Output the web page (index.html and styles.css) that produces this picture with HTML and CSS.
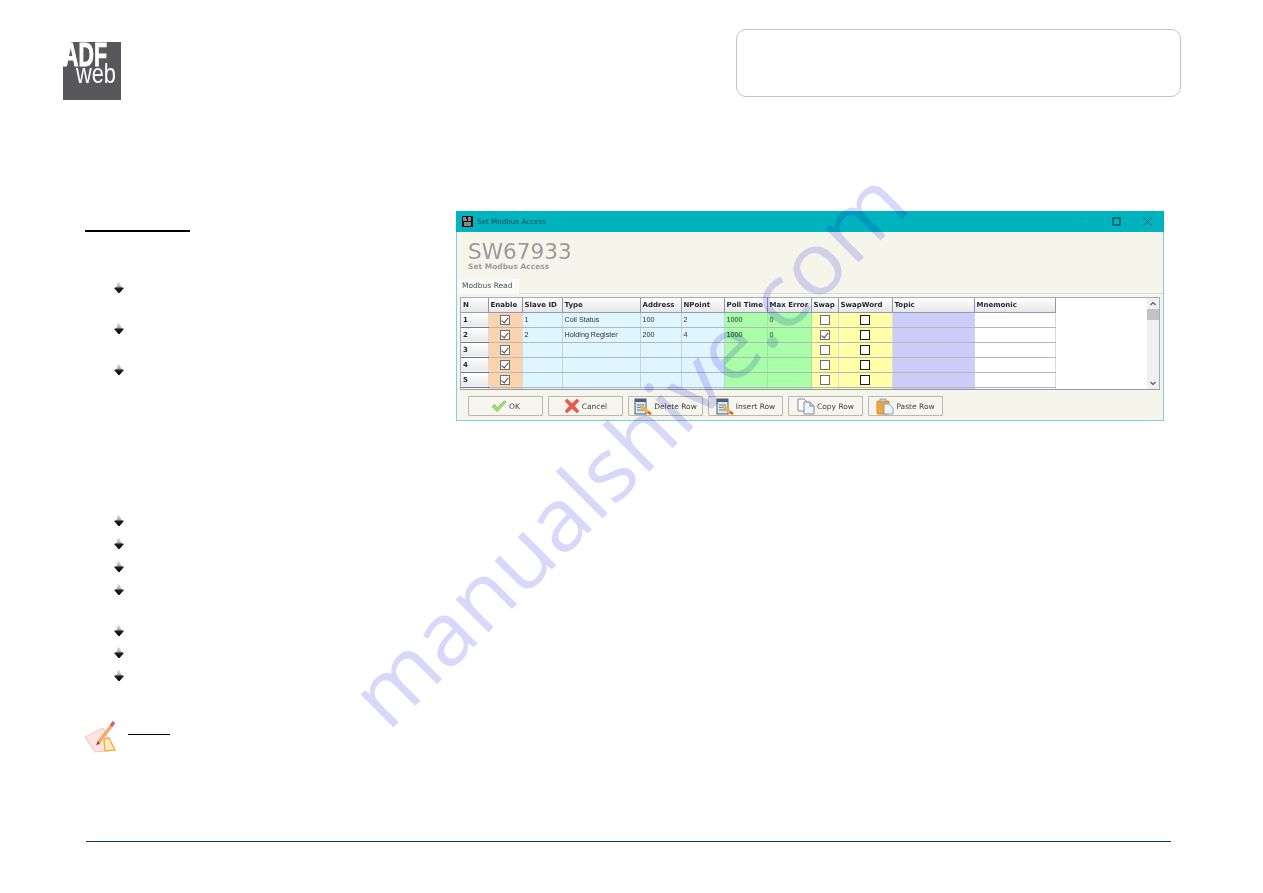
FILE: index.html
```html
<!DOCTYPE html>
<html lang="en">
<head>
<meta charset="utf-8">
<title>SW67933 Set Modbus Access</title>
<link rel="stylesheet" href="styles.css">
</head>
<body>
<div class="page">
  <header class="header">
    <svg class="logo" width="58" height="58" viewBox="0 0 58 58">
      <path d="M8 0H58V58H0V24H3Z" fill="#58585a"/>
      <text class="logo-adf" x="0" y="24" textLength="44" lengthAdjust="spacingAndGlyphs">ADF</text>
      <text class="logo-web" x="13" y="41" textLength="40" lengthAdjust="spacingAndGlyphs">web</text>
    </svg>
    <div class="title-box"></div>
  </header>

  <main class="main">
    <section class="left">
      <div class="heading"></div>
      <ul class="bullets first">
        <li class="tall"><i class="bullet"></i></li>
        <li class="tall"><i class="bullet"></i></li>
        <li class="tall"><i class="bullet"></i></li>
      </ul>
      <ul class="bullets second">
        <li><i class="bullet"></i></li>
        <li><i class="bullet"></i></li>
        <li><i class="bullet"></i></li>
        <li class="tall"><i class="bullet"></i></li>
        <li class="short"><i class="bullet"></i></li>
        <li><i class="bullet"></i></li>
        <li><i class="bullet"></i></li>
      </ul>
      <div class="note">
        <svg width="34" height="34" viewBox="0 0 34 34">
          <path d="M2 17 20 8 32 30 12 32Z" fill="#fde4e0" stroke="#efb8b2" stroke-width=".8"/>
          <path d="M21 19 26 18 32 30 22 31Z" fill="#fdebc0" stroke="#eeb04a" stroke-width="1.4"/>
          <path d="M15 23 29 5" stroke="#f3ab6c" stroke-width="3.4" fill="none"/>
          <path d="M28 6 31 2" stroke="#d4607a" stroke-width="3.4" fill="none"/>
          <path d="M13 25 15 21 17 24Z" fill="#a04030"/>
        </svg>
        <span class="note-label"></span>
      </div>
    </section>

    <section class="window">
      <div class="titlebar">
        <svg class="app-icon" width="11" height="11" viewBox="0 0 11 11">
          <rect width="11" height="11" fill="#111"/>
          <path d="M1 2h3M6 2h3M1 4h4M6 4h3M2 7h7M2 9h7" stroke="#fff" stroke-width="1"/>
        </svg>
        <span class="title-text">Set Modbus Access</span>
        <div class="controls">
          <svg width="9" height="9" viewBox="0 0 9 9"><path d="M1 5h7" stroke="#33a9b2"/></svg>
          <svg width="9" height="9" viewBox="0 0 9 9"><rect x="1" y="1" width="7" height="7" fill="none" stroke="#123f48" stroke-width="1.2"/></svg>
          <svg width="9" height="9" viewBox="0 0 9 9"><path d="M.5.5l8 8M8.5.5l-8 8" stroke="#2a5f6c"/></svg>
        </div>
      </div>

      <div class="win-head">
        <div class="win-name">SW67933</div>
        <div class="win-sub">Set Modbus Access</div>
      </div>

      <div class="tabs"><span class="tab">Modbus Read</span></div>

      <div class="pane">
        <div class="grid-wrap">
          <table class="grid">
            <thead>
              <tr>
                <th class="c-n">N</th><th class="c-en">Enable</th><th class="c-slave">Slave ID</th><th class="c-type">Type</th>
                <th class="c-addr">Address</th><th class="c-np">NPoint</th><th class="c-poll">Poll Time</th><th class="c-max">Max Error</th>
                <th class="c-swap">Swap</th><th class="c-sw">SwapWord</th><th class="c-topic">Topic</th><th class="c-mn">Mnemonic</th>
              </tr>
            </thead>
            <tbody>
              <tr>
                <td class="num">1</td><td class="orange"><span class="cb on"></span></td><td class="blue">1</td><td class="blue">Coil Status</td>
                <td class="blue">100</td><td class="blue">2</td><td class="green">1000</td><td class="green">0</td>
                <td class="yellow"><span class="cb"></span></td><td class="yellow"><span class="cb dark"></span></td><td class="lav"></td><td></td>
              </tr>
              <tr>
                <td class="num">2</td><td class="orange"><span class="cb on"></span></td><td class="blue">2</td><td class="blue">Holding Register</td>
                <td class="blue">200</td><td class="blue">4</td><td class="green">1000</td><td class="green">0</td>
                <td class="yellow"><span class="cb on"></span></td><td class="yellow"><span class="cb dark"></span></td><td class="lav"></td><td></td>
              </tr>
              <tr>
                <td class="num">3</td><td class="orange"><span class="cb on"></span></td><td class="blue"></td><td class="blue"></td>
                <td class="blue"></td><td class="blue"></td><td class="green"></td><td class="green"></td>
                <td class="yellow"><span class="cb"></span></td><td class="yellow"><span class="cb dark"></span></td><td class="lav"></td><td></td>
              </tr>
              <tr>
                <td class="num">4</td><td class="orange"><span class="cb on"></span></td><td class="blue"></td><td class="blue"></td>
                <td class="blue"></td><td class="blue"></td><td class="green"></td><td class="green"></td>
                <td class="yellow"><span class="cb"></span></td><td class="yellow"><span class="cb dark"></span></td><td class="lav"></td><td></td>
              </tr>
              <tr>
                <td class="num">5</td><td class="orange"><span class="cb on"></span></td><td class="blue"></td><td class="blue"></td>
                <td class="blue"></td><td class="blue"></td><td class="green"></td><td class="green"></td>
                <td class="yellow"><span class="cb"></span></td><td class="yellow"><span class="cb dark"></span></td><td class="lav"></td><td></td>
              </tr>
              <tr>
                <td class="num"></td><td class="orange"></td><td class="blue"></td><td class="blue"></td>
                <td class="blue"></td><td class="blue"></td><td class="green"></td><td class="green"></td>
                <td class="yellow"></td><td class="yellow"></td><td class="lav"></td><td></td>
              </tr>
            </tbody>
          </table>
        </div>
        <div class="scrollbar">
          <svg width="12" height="11" viewBox="0 0 12 11"><path d="M3.5 7 6 4.5 8.5 7" fill="none" stroke="#555" stroke-width="1.2"/></svg>
          <div class="thumb"></div>
          <svg class="down" width="12" height="11" viewBox="0 0 12 11"><path d="M3.5 4 6 6.5 8.5 4" fill="none" stroke="#555" stroke-width="1.2"/></svg>
        </div>
      </div>

      <div class="actions">
        <button class="btn" type="button">
          <svg width="16" height="15" viewBox="0 0 18 16"><path d="M1 8 4 5.5 7 9 15 1.5 17 3 7 14Z" fill="#a0dc70" stroke="#7ab85c" stroke-width=".7"/></svg>
          <span>OK</span>
        </button>
        <button class="btn" type="button">
          <svg width="16" height="16" viewBox="0 0 16 16"><path d="M1 3 3 1 8 5.5 13 1 15 3 10.5 8 15 13 13 15 8 10.5 3 15 1 13 5.5 8Z" fill="#ec5a4c" stroke="#d8483c" stroke-width=".5"/></svg>
          <span>Cancel</span>
        </button>
        <button class="btn" type="button">
          <svg width="18" height="17" viewBox="0 0 18 17">
            <rect x="1" y="1" width="11" height="15" fill="#dbe4ef" stroke="#4f5f78"/>
            <path d="M1 1h11v3H1Z" fill="#4f5f78"/>
            <path d="M3 7h7M3 9.5h7M3 12h7" stroke="#6d80a0"/>
            <path d="M7 8l8 7" stroke="#f0b040" stroke-width="3"/>
            <path d="M14 14l3 2" stroke="#d85a30" stroke-width="2.5"/>
          </svg>
          <span>Delete Row</span>
        </button>
        <button class="btn" type="button">
          <svg width="18" height="17" viewBox="0 0 18 17">
            <rect x="1" y="1" width="11" height="15" fill="#dbe4ef" stroke="#4f5f78"/>
            <path d="M1 1h11v3H1Z" fill="#4f5f78"/>
            <path d="M3 7h7M3 9.5h7M3 12h7" stroke="#6d80a0"/>
            <path d="M7 8l8 7" stroke="#f0b040" stroke-width="3"/>
            <path d="M14 14l3 2" stroke="#d85a30" stroke-width="2.5"/>
          </svg>
          <span>Insert Row</span>
        </button>
        <button class="btn" type="button">
          <svg width="18" height="17" viewBox="0 0 18 17">
            <path d="M1 1h6l3 3v9H1Z" fill="#fff" stroke="#7c8aa0"/>
            <path d="M7 4h6l4 4v8H7Z" fill="#eef4fa" stroke="#7c8aa0"/>
            <path d="M13 4v4h4" fill="#bcd2e8" stroke="#7c8aa0"/>
          </svg>
          <span>Copy Row</span>
        </button>
        <button class="btn" type="button">
          <svg width="18" height="17" viewBox="0 0 18 17">
            <rect x="1" y="3" width="12" height="13" rx="1" fill="#f2a63f" stroke="#d08a2a"/>
            <rect x="4" y="1" width="6" height="3" fill="#c9c9c9" stroke="#8a8a8a" stroke-width=".6"/>
            <path d="M8 6h5l4 4v6H8Z" fill="#eef4fa" stroke="#8aa0b8"/>
          </svg>
          <span>Paste Row</span>
        </button>
      </div>
    </section>
  </main>

  <footer class="footer"></footer>

  <svg class="watermark" width="1263" height="893" viewBox="0 0 1263 893">
    <text x="388" y="733" transform="rotate(-45 388 733)" textLength="742" lengthAdjust="spacingAndGlyphs">manualshive.com</text>
  </svg>
</div>
</body>
</html>
```

FILE: styles.css
```css
* { box-sizing: border-box; }

html, body { margin: 0; padding: 0; background: #fff; }

body { font-family: "DejaVu Sans", sans-serif; color: #333; }

.page {
  position: relative;
  width: 1263px;
  height: 893px;
  overflow: hidden;
  display: flex;
  flex-direction: column;
  padding-bottom: 51px;
}

/* header */
.header {
  display: flex;
  justify-content: space-between;
  align-items: flex-start;
  height: 97px;
  padding: 29px 82px 0 63px;
  flex: none;
}

.logo { margin-top: 13px; display: block; overflow: visible; }

.logo-adf {
  font-family: "Liberation Sans", sans-serif;
  font-weight: 700;
  font-size: 33px;
  fill: #fff;
  stroke: #fff;
  stroke-width: .9px;
}

.logo-web {
  font-family: "Liberation Sans", sans-serif;
  font-size: 28px;
  fill: #fff;
}

.title-box {
  width: 445px;
  height: 68px;
  border: 1px solid #c4c4c4;
  border-radius: 10px;
}

/* main */
.main {
  display: flex;
  flex: 1;
  margin-top: 114px;
  padding-left: 86px;
}

.left { width: 370px; flex: none; }

.heading {
  width: 105px;
  height: 21px;
  margin-left: -1px;
  border-bottom: 2px solid #000;
}

.bullets { list-style: none; margin: 0; padding: 0 0 0 28px; }
.bullets.first { margin-top: 50px; }
.bullets.second { margin-top: 110px; }
.bullets li { height: 23px; }
.bullets li.tall { height: 41px; }
.bullets li.short { height: 22px; }

.bullet {
  display: block;
  width: 10px;
  height: 11px;
  background: linear-gradient(#e6e6e6 0%, #b0b0b0 40%, #222 58%, #000 100%);
  clip-path: polygon(35% 0, 60% 10%, 70% 40%, 100% 55%, 55% 100%, 45% 100%, 0 55%, 30% 40%);
}

.note {
  display: flex;
  align-items: flex-start;
  margin: 27px 0 0 -3px;
}

.note-label {
  display: block;
  width: 42px;
  height: 15px;
  margin: 0 0 0 11px;
  border-bottom: 1px solid #000;
}

/* dialog window */
.window {
  width: 708px;
  height: 210px;
  flex: none;
  display: flex;
  flex-direction: column;
  background: #f5f5ec;
  border: 1px solid #7fd3d8;
  border-top: 0;
}

.titlebar {
  display: flex;
  align-items: center;
  height: 21px;
  margin: 0 -1px;
  padding-left: 6px;
  background: #00b4bf;
  flex: none;
}

.title-text {
  margin-left: 4px;
  font-family: "DejaVu Sans", sans-serif;
  font-size: 7.2px;
  color: #1f4a54;
}

.controls {
  display: flex;
  gap: 22px;
  margin-left: auto;
  padding-right: 12px;
}

.controls svg { display: block; }

.win-head {
  height: 47px;
  padding: 8px 0 0 11px;
  flex: none;
}

.win-name {
  font-size: 21.6px;
  line-height: 24px;
  color: #9a9a9a;
}

.win-sub {
  font-size: 7.5px;
  line-height: 9px;
  margin-top: -2px;
  font-weight: 700;
  color: #9a9a9a;
}

.tabs {
  height: 18px;
  flex: none;
  background: linear-gradient(#f5f5ec 0, #f5f5ec 14px, #dcdcd4 14px, #dcdcd4 15px, #f5f5ec 15px);
}

.tab {
  display: block;
  width: 62px;
  height: 15px;
  padding-left: 5px;
  font-size: 7.5px;
  line-height: 14px;
  color: #44505a;
  background: #fbfbf6;
}

.pane {
  display: flex;
  height: 93px;
  margin: 0 3px;
  flex: none;
  background: #fff;
  border: 1px solid #a4acc0;
  border-bottom: 1px solid #8f98b4;
  overflow: hidden;
}

.grid-wrap { flex: 1; overflow: hidden; }

.grid {
  table-layout: fixed;
  width: 594px;
  border-collapse: collapse;
  font-size: 7.2px;
}

.grid th {
  height: 14px;
  padding: 0 0 0 2px;
  font-family: "DejaVu Sans", sans-serif;
  font-size: 7px;
  font-weight: 700;
  text-align: left;
  color: #1e2430;
  background: linear-gradient(#fff, #e6e6e6);
  border-right: 1px solid #8f98a8;
  border-bottom: 1px solid #8f9ab4;
  overflow: hidden;
  white-space: nowrap;
}

.grid td {
  height: 15px;
  padding: 0 0 0 2px;
  font-family: "Liberation Sans", sans-serif;
  font-size: 7.2px;
  color: #2a3034;
  border-bottom: 1px solid #b4b8bc;
  border-right: 1px solid #d8dcdc;
  white-space: nowrap;
}

.c-n { width: 27px; }
.c-en { width: 34px; }
.c-slave { width: 40px; }
.c-type { width: 78px; }
.c-addr { width: 41px; }
.c-np { width: 43px; }
.c-poll { width: 43px; }
.c-max { width: 44px; }
.c-swap { width: 27px; }
.c-sw { width: 54px; }
.c-topic { width: 82px; }
.c-mn { width: 81px; }

.grid td.num {
  font-family: "DejaVu Sans", sans-serif;
  font-weight: 700;
  font-size: 7px;
  color: #1e2430;
  background: linear-gradient(#fff, #e8e8e8);
  border-bottom: 1px solid #707880;
}

.grid td.orange { background: #fdd3ae; text-align: center; padding: 0; }
.grid td.blue { background: #e0f6ff; border-right-color: #c4d2da; }
.grid td.green { background: #a8ffa8; border-right-color: #9ce89c; }
.grid td.yellow { background: #ffffa8; text-align: center; padding: 0; }
.grid td.lav { background: #cdcdfa; border-right-color: #cdcdfa; }

.cb {
  position: relative;
  display: inline-block;
  width: 10px;
  height: 10px;
  vertical-align: middle;
  background: #fff;
  border: 1px solid #68707a;
}

.cb.dark { border-color: #1c1c1c; }

.cb.on::after {
  content: "";
  position: absolute;
  left: 2px;
  top: 0;
  width: 3px;
  height: 6px;
  border-right: 1px solid #444;
  border-bottom: 1px solid #444;
  transform: rotate(40deg);
}

.scrollbar {
  display: flex;
  flex-direction: column;
  width: 12px;
  flex: none;
  background: #f0f0f0;
}

.scrollbar svg { display: block; }
.scrollbar .down { margin-top: auto; }

.thumb { height: 11px; background: #c2c2c2; }

.actions {
  display: flex;
  gap: 5px;
  flex: 1;
  padding: 6px 0 0 11px;
}

.btn {
  display: flex;
  align-items: center;
  justify-content: center;
  gap: 2px;
  width: 75px;
  height: 20px;
  padding: 0;
  font-family: "DejaVu Sans", sans-serif;
  font-size: 7.5px;
  color: #3a3f44;
  background: #f6f6ee;
  border: 1px solid #b8b8b0;
  border-radius: 1px;
}

.btn svg { flex: none; }

/* footer */
.footer {
  flex: none;
  height: 1px;
  margin: 0 92px 0 86px;
  background: #123a60;
}

/* watermark */
.watermark {
  position: absolute;
  left: 0;
  top: 0;
  pointer-events: none;
  mix-blend-mode: multiply;
}

.watermark text {
  font-family: "Open Sans", sans-serif;
  font-size: 87px;
  fill: #d8d8fa;
}
```
